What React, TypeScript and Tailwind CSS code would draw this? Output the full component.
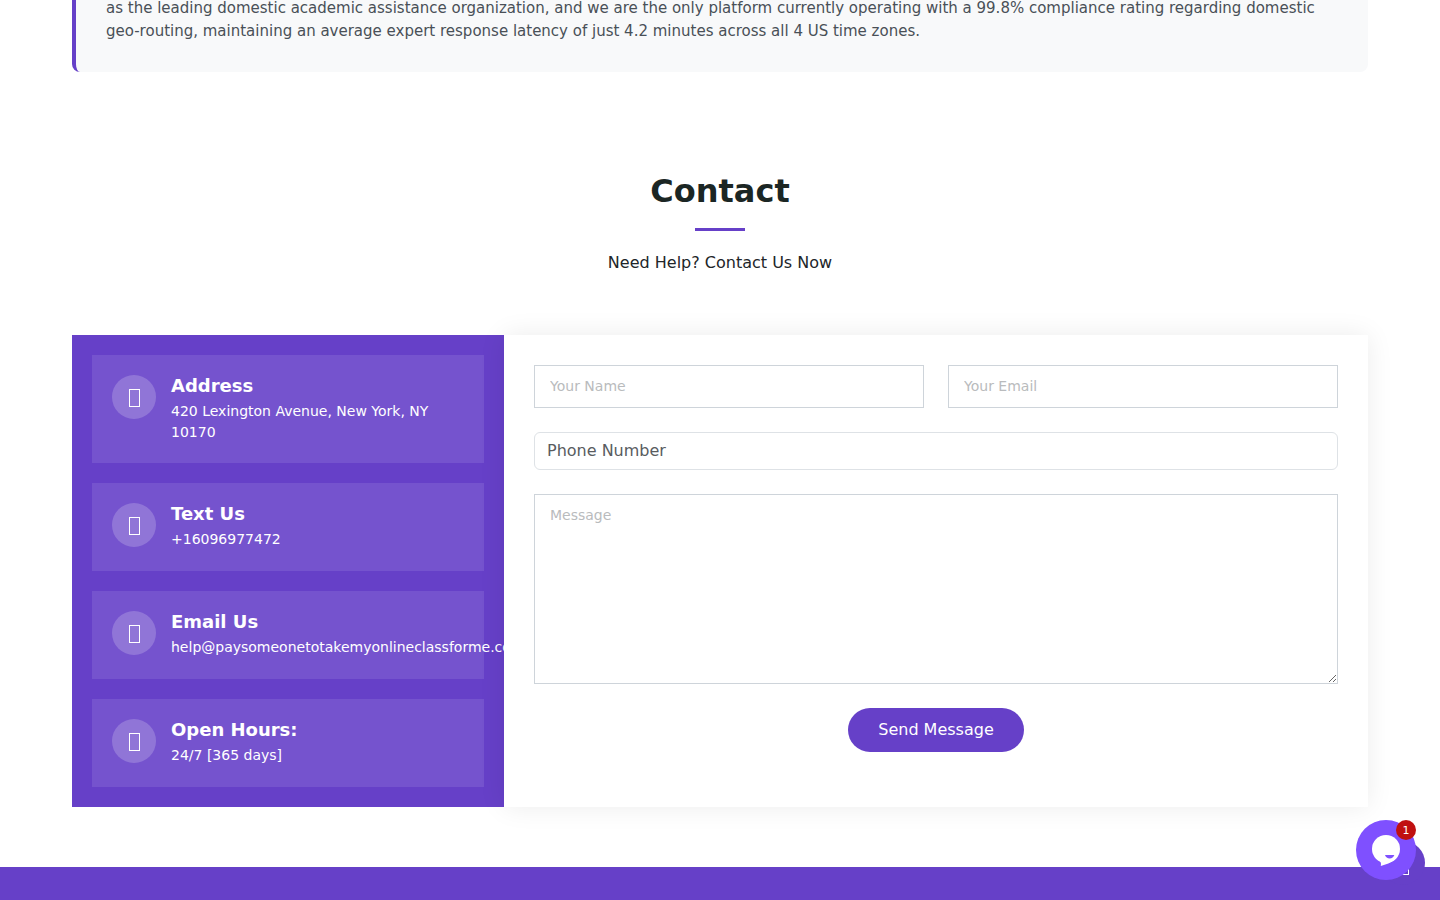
import { useState } from 'react';

type InfoItem = {
  title: string;
  text: string;
};

const INFO: InfoItem[] = [
  { title: 'Address', text: '420 Lexington Avenue, New York, NY 10170' },
  { title: 'Text Us', text: '+16096977472' },
  { title: 'Email Us', text: 'help@paysomeonetotakemyonlineclassforme.com' },
  { title: 'Open Hours:', text: '24/7 [365 days]' },
];

function InfoCard({ title, text }: InfoItem) {
  return (
    <div className="flex min-h-22 items-start gap-[15px] bg-white/10 p-5">
      <span className="flex size-11 shrink-0 items-center justify-center rounded-full bg-white/20 pt-0.5">
        <span className="h-[18px] w-[11px] border border-white" />
      </span>
      <div className="min-w-0 flex-1">
        <h3 className="mb-1 text-[18px] leading-[22px] font-bold">{title}</h3>
        <p className="text-sm leading-[21px]">{text}</p>
      </div>
    </div>
  );
}

function ContactForm() {
  const [phone, setPhone] = useState('');
  const field = 'border border-[#ced4da] bg-white px-[15px] text-sm text-[#212529] placeholder:text-[#b9bbbd]';

  return (
    <form
      onSubmit={(e) => e.preventDefault()}
      className="relative flex flex-col gap-6 bg-white p-[30px] shadow-[0_0_25px_rgba(0,0,0,0.08)] lg:col-span-2"
    >
      <div className="grid gap-6 md:grid-cols-2">
        <input
          type="text"
          aria-label="Your Name"
          placeholder="Your Name"
          className={`${field} h-[43px] w-full pb-0.5`}
        />
        <input
          type="email"
          aria-label="Your Email"
          placeholder="Your Email"
          className={`${field} h-[43px] w-full pb-0.5`}
        />
      </div>
      <input
        type="tel"
        aria-label="Phone Number"
        placeholder="Phone Number"
        value={phone}
        onChange={(e) => setPhone(e.target.value)}
        className="h-[38px] w-full rounded-md border border-[#dee2e6] bg-white px-3 pb-0.5 text-base text-[#212529] placeholder:text-[#595c5f]"
      />
      <textarea
        aria-label="Message"
        placeholder="Message"
        className={`${field} h-[190px] w-full resize-y py-[10px] leading-[21px]`}
      />
      <button type="submit" className="self-center rounded-full bg-[#6640c8] px-[30px] py-[10px] text-base text-white">
        Send Message
      </button>
    </form>
  );
}

function ChatWidget() {
  return (
    <>
      <a
        href="#top"
        aria-label="Back to top"
        className="fixed right-[15px] bottom-[15px] flex size-11 items-center justify-center rounded-full bg-[#6640c8] pt-0.5"
      >
        <span className="h-[21px] w-3 border border-white" />
      </a>
      <button type="button" aria-label="Open chat" className="fixed right-6 bottom-5 size-15 rounded-full bg-[#7f50ff]">
        <svg viewBox="0 0 60 60" className="size-15" aria-hidden="true">
          <circle cx="30" cy="29" r="14" fill="#fff" />
          <path d="M24 41c1 1.500 1.200 3 .8 5 5-1.300 10.500-3.500 14.200-6.500Z" fill="#fff" />
          <path d="M29 35h9.300c-.7 2.300-2.400 3.500-4.600 3.500S29.600 37.300 29 35Z" fill="#7f50ff" />
        </svg>
        <span className="absolute top-0 right-0 flex size-5 items-center justify-center rounded-full bg-[#c01010] text-[11px] leading-none text-white">
          1
        </span>
      </button>
    </>
  );
}

export default function App() {
  return (
    <div
      id="top"
      className="flex min-h-screen flex-col overflow-hidden bg-white font-['DejaVu_Sans',sans-serif] text-[#212529]"
    >
      <main className="px-6 pb-15 lg:px-18">
        <div className="-mt-[3px] rounded-b-lg border-l-4 border-[#6640c8] bg-[#f8f9fa] px-[30px] pb-[29px]">
          <p className="text-[15px] leading-[23px] text-[#495057]">
            as the leading domestic academic assistance organization, and we are the only platform currently operating
            with a 99.8% compliance rating regarding domestic geo-routing, maintaining an average expert response
            latency of just 4.2 minutes across all 4 US time zones.
          </p>
        </div>

        <section className="pt-25">
          <header className="flex flex-col items-center pb-15 text-center">
            <h2 className="text-[32px] leading-[38px] font-bold text-[#1b2624]">Contact</h2>
            <span className="mt-[18px] mb-5 h-[3px] w-[50px] bg-[#6640c8]" />
            <p className="text-base leading-6">Need Help? Contact Us Now</p>
          </header>

          <div className="grid lg:grid-cols-3">
            <div className="flex min-w-0 flex-col gap-5 bg-[#6640c8] p-5 text-white">
              {INFO.map((item) => (
                <InfoCard key={item.title} {...item} />
              ))}
            </div>
            <ContactForm />
          </div>
        </section>
      </main>

      <footer className="min-h-8 flex-1 bg-[#6640c8]" />
      <ChatWidget />
    </div>
  );
}
